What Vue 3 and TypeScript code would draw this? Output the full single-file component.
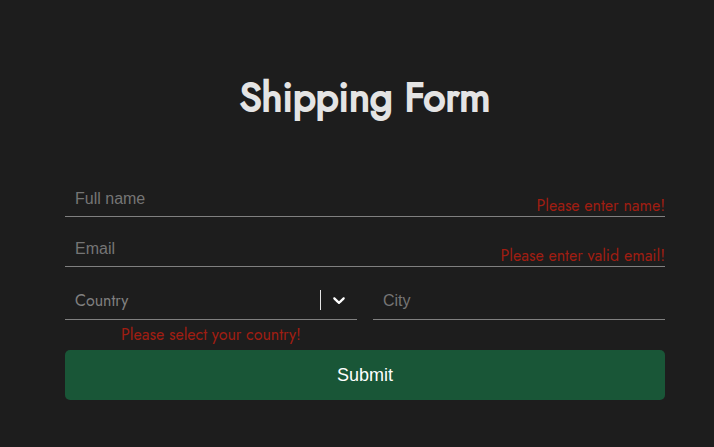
<script setup lang="ts">
import { reactive } from 'vue'

interface ShippingDetails {
  name: string
  email: string
  country: string
  city: string
}

const details = reactive<ShippingDetails>({ name: '', email: '', country: '', city: '' })
const countries: string[] = ['Canada', 'France', 'Germany', 'United Kingdom', 'United States']
</script>

<template>
  <main class="page">
    <h1 class="title">Shipping Form</h1>
    <form class="form" novalidate @submit.prevent>
      <div class="field">
        <input v-model="details.name" class="control" type="text" placeholder="Full name" aria-label="Full name" aria-describedby="name-error" />
        <span id="name-error" class="error inside">Please enter name!</span>
      </div>
      <div class="field">
        <input v-model="details.email" class="control" type="email" placeholder="Email" aria-label="Email" aria-describedby="email-error" />
        <span id="email-error" class="error inside">Please enter valid email!</span>
      </div>
      <div class="row">
        <div class="column">
          <div class="select-box">
            <select v-model="details.country" class="control select" aria-label="Country" aria-describedby="country-error">
              <option value="" disabled>Country</option>
              <option v-for="country in countries" :key="country" :value="country">{{ country }}</option>
            </select>
            <span class="indicator">
              <svg width="20" height="20" viewBox="0 0 20 20" aria-hidden="true">
                <path
                  fill="currentColor"
                  d="M4.516 7.548c0.436-0.446 1.043-0.481 1.576 0l3.908 3.747 3.908-3.747c0.533-0.481 1.141-0.446 1.574 0 0.436 0.445 0.408 1.197 0 1.615-0.406 0.418-4.695 4.502-4.695 4.502-0.217 0.223-0.502 0.335-0.787 0.335s-0.57-0.112-0.789-0.335c0 0-4.287-4.084-4.695-4.502s-0.436-1.17 0-1.615z"
                />
              </svg>
            </span>
          </div>
          <span id="country-error" class="error below">Please select your country!</span>
        </div>
        <div class="column">
          <input v-model="details.city" class="control city" type="text" placeholder="City" aria-label="City" />
        </div>
      </div>
      <button class="submit" type="submit">Submit</button>
    </form>
  </main>
</template>

<style>
body {
  margin: 0;
  background: #1d1d1d;
}
</style>

<style scoped>
.page {
  box-sizing: border-box;
  min-height: 100vh;
  padding: 67px 49px 40px 65px;
  background: #1d1d1d;
  color: #e4e4e4;
  font-family: Jost, Lato, sans-serif;
  font-size: 16px;
}

.title {
  margin: 0 0 53px;
  font-size: 40px;
  font-weight: 400;
  line-height: 60px;
  text-align: center;
  -webkit-text-stroke: 2px currentColor;
}

.form {
  display: flex;
  flex-direction: column;
}

.field {
  position: relative;
  padding-bottom: 13px;
}

.control {
  box-sizing: border-box;
  display: block;
  width: 100%;
  height: 37px;
  padding: 2px 10px 0;
  border: 0;
  border-bottom: 1px solid #808080;
  border-radius: 0;
  outline: 0;
  background: transparent;
  color: #e4e4e4;
  font-family: "Liberation Sans", Arial, sans-serif;
  font-size: 16px;
}

.control::placeholder {
  color: #757575;
  opacity: 1;
}

.error {
  color: #a01d12;
  line-height: 20px;
}

.inside {
  position: absolute;
  right: 0;
  bottom: 14px;
  pointer-events: none;
}

.row {
  display: grid;
  grid-template-columns: 1fr 1fr;
  gap: 16px;
}

.column {
  display: flex;
  flex-direction: column;
}

.select-box {
  position: relative;
}

.select {
  height: 40px;
  appearance: none;
  color: #808080;
  font-family: Jost, Lato, sans-serif;
}

.city {
  height: 40px;
}

.indicator {
  position: absolute;
  top: 10px;
  right: 8px;
  display: flex;
  padding-left: 8px;
  border-left: 1px solid #e4e4e4;
  color: #ffffff;
  pointer-events: none;
}

.below {
  padding: 5px 0;
  text-align: center;
}

.submit {
  height: 50px;
  border: 0;
  border-radius: 5px;
  background: #195637;
  color: #ffffff;
  font-family: "Liberation Sans", Arial, sans-serif;
  font-size: 18px;
  cursor: pointer;
}
</style>
